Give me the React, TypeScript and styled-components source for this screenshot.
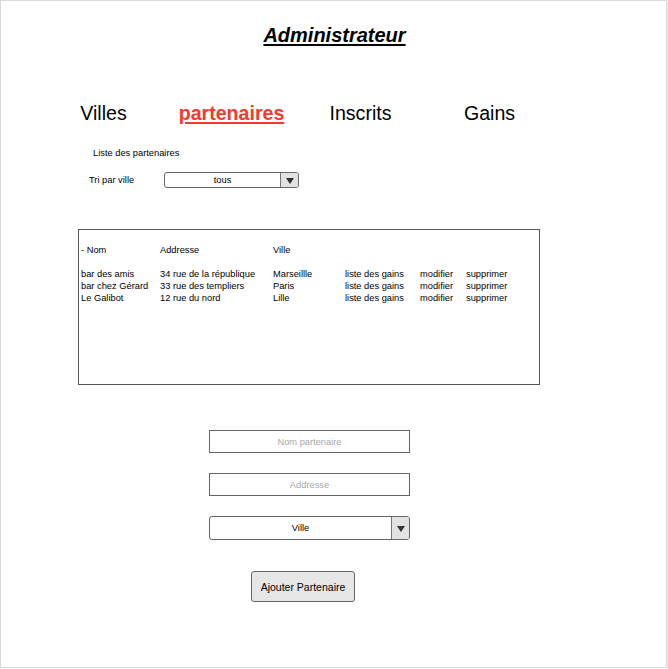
import React from "react";
import styled, { createGlobalStyle } from "styled-components";

const Global = createGlobalStyle`
  html, body { margin: 0; padding: 0; background: #fff; }
  body { font-family: "Liberation Sans", Arial, sans-serif; color: #000; }
`;

const Frame = styled.div`
  box-sizing: border-box;
  width: 667px;
  height: 668px;
  border: 1px solid #d9d9d9;
  box-shadow: 1px 1px 0 #ececec;
  display: flex;
  flex-direction: column;
`;

const Title = styled.h1`
  margin: 22px 0 0 0;
  height: 24px;
  line-height: 24px;
  font-size: 20px;
  font-weight: bold;
  font-style: italic;
  text-align: center;
  text-decoration: underline;
  text-decoration-thickness: 2px;
  text-underline-offset: 2px;
  padding-left: 2px;
`;

const Tabs = styled.nav`
  margin: 54px 0 0 39px;
  display: grid;
  grid-template-columns: 127px 129px 129px 129px;
`;

const Tab = styled.a<{ $active?: boolean }>`
  display: block;
  height: 24px;
  line-height: 24px;
  text-align: center;
  font-size: 19.6px;
  font-weight: ${(p) => (p.$active ? "bold" : "normal")};
  color: ${(p) => (p.$active ? "#f4392d" : "#000")};
  text-decoration: ${(p) => (p.$active ? "underline" : "none")};
  text-decoration-thickness: 2px;
  text-underline-offset: 2px;
`;

const Small = styled.div`
  font-size: 9.3px;
  line-height: 12px;
`;

const SectionLabel = styled(Small)`
  margin: 22px 0 0 92px;
`;

const FilterRow = styled.div`
  margin: 13px 0 0 88px;
  display: flex;
  align-items: center;
  height: 16px;
`;

const FilterLabel = styled(Small)`
  width: 75px;
`;

const Select = styled.div<{ $w: number; $h: number }>`
  box-sizing: border-box;
  width: ${(p) => p.$w}px;
  height: ${(p) => p.$h}px;
  border: 1px solid #666;
  border-radius: 3px;
  display: flex;
  overflow: hidden;
  background: #fff;
`;

const SelectValue = styled.div`
  flex: 1;
  display: flex;
  align-items: center;
  justify-content: center;
  font-size: 9.3px;
`;

const SelectArrow = styled.div`
  width: 17px;
  border-left: 1px solid #777;
  background: #e2e2e2;
  display: flex;
  align-items: center;
  justify-content: center;
`;

const Triangle = styled.span`
  width: 0;
  height: 0;
  border-left: 4px solid transparent;
  border-right: 4px solid transparent;
  border-top: 6px solid #333;
  margin-top: 1px;
`;

const Table = styled.div`
  box-sizing: border-box;
  margin: 41px 0 0 77px;
  width: 462px;
  height: 156px;
  border: 1px solid #555;
  padding: 14px 0 0 2px;
`;

const Row = styled.div<{ $gap?: number }>`
  display: grid;
  grid-template-columns: 79px 113px 72px 75px 46px auto;
  font-size: 9.3px;
  line-height: 12px;
  margin-top: ${(p) => p.$gap ?? 0}px;
  white-space: nowrap;
`;

const Form = styled.div`
  margin: 45px 0 0 208px;
  display: flex;
  flex-direction: column;
  align-items: flex-start;
`;

const Input = styled.div<{ $gap?: number }>`
  box-sizing: border-box;
  width: 201px;
  height: 23px;
  margin-top: ${(p) => p.$gap ?? 0}px;
  border: 1px solid #666;
  display: flex;
  align-items: center;
  justify-content: center;
  font-size: 9.3px;
  color: #a8a8a8;
`;

const SelectWrap = styled.div`
  margin-top: 20px;
`;

const Button = styled.button`
  box-sizing: border-box;
  margin: 31px 0 0 42px;
  width: 104px;
  height: 31px;
  border: 1px solid #666;
  border-radius: 3px;
  background: #e6e6e6;
  font-family: "Liberation Sans", Arial, sans-serif;
  font-size: 10.5px;
  color: #000;
  padding: 0;
`;

const rows = [
  ["bar des amis", "34 rue de la république", "Marseillle", "liste des gains", "modifier", "supprimer"],
  ["bar chez Gérard", "33 rue des templiers", "Paris", "liste des gains", "modifier", "supprimer"],
  ["Le Galibot", "12 rue du nord", "Lille", "liste des gains", "modifier", "supprimer"],
];

export default function App() {
  return (
    <>
      <Global />
      <Frame>
        <Title>Administrateur</Title>
        <Tabs>
          <Tab>Villes</Tab>
          <Tab $active>partenaires</Tab>
          <Tab>Inscrits</Tab>
          <Tab>Gains</Tab>
        </Tabs>
        <SectionLabel>Liste des partenaires</SectionLabel>
        <FilterRow>
          <FilterLabel>Tri par ville</FilterLabel>
          <Select $w={135} $h={16}>
            <SelectValue>tous</SelectValue>
            <SelectArrow>
              <Triangle />
            </SelectArrow>
          </Select>
        </FilterRow>
        <Table>
          <Row>
            <span>- Nom</span>
            <span>Addresse</span>
            <span>Ville</span>
          </Row>
          {rows.map((r, i) => (
            <Row key={i} $gap={i === 0 ? 12 : 0}>
              {r.map((c, j) => (
                <span key={j}>{c}</span>
              ))}
            </Row>
          ))}
        </Table>
        <Form>
          <Input>Nom partenaire</Input>
          <Input $gap={20}>Addresse</Input>
          <SelectWrap>
            <Select $w={201} $h={24}>
              <SelectValue>Ville</SelectValue>
              <SelectArrow>
                <Triangle />
              </SelectArrow>
            </Select>
          </SelectWrap>
          <Button>Ajouter Partenaire</Button>
        </Form>
      </Frame>
    </>
  );
}
